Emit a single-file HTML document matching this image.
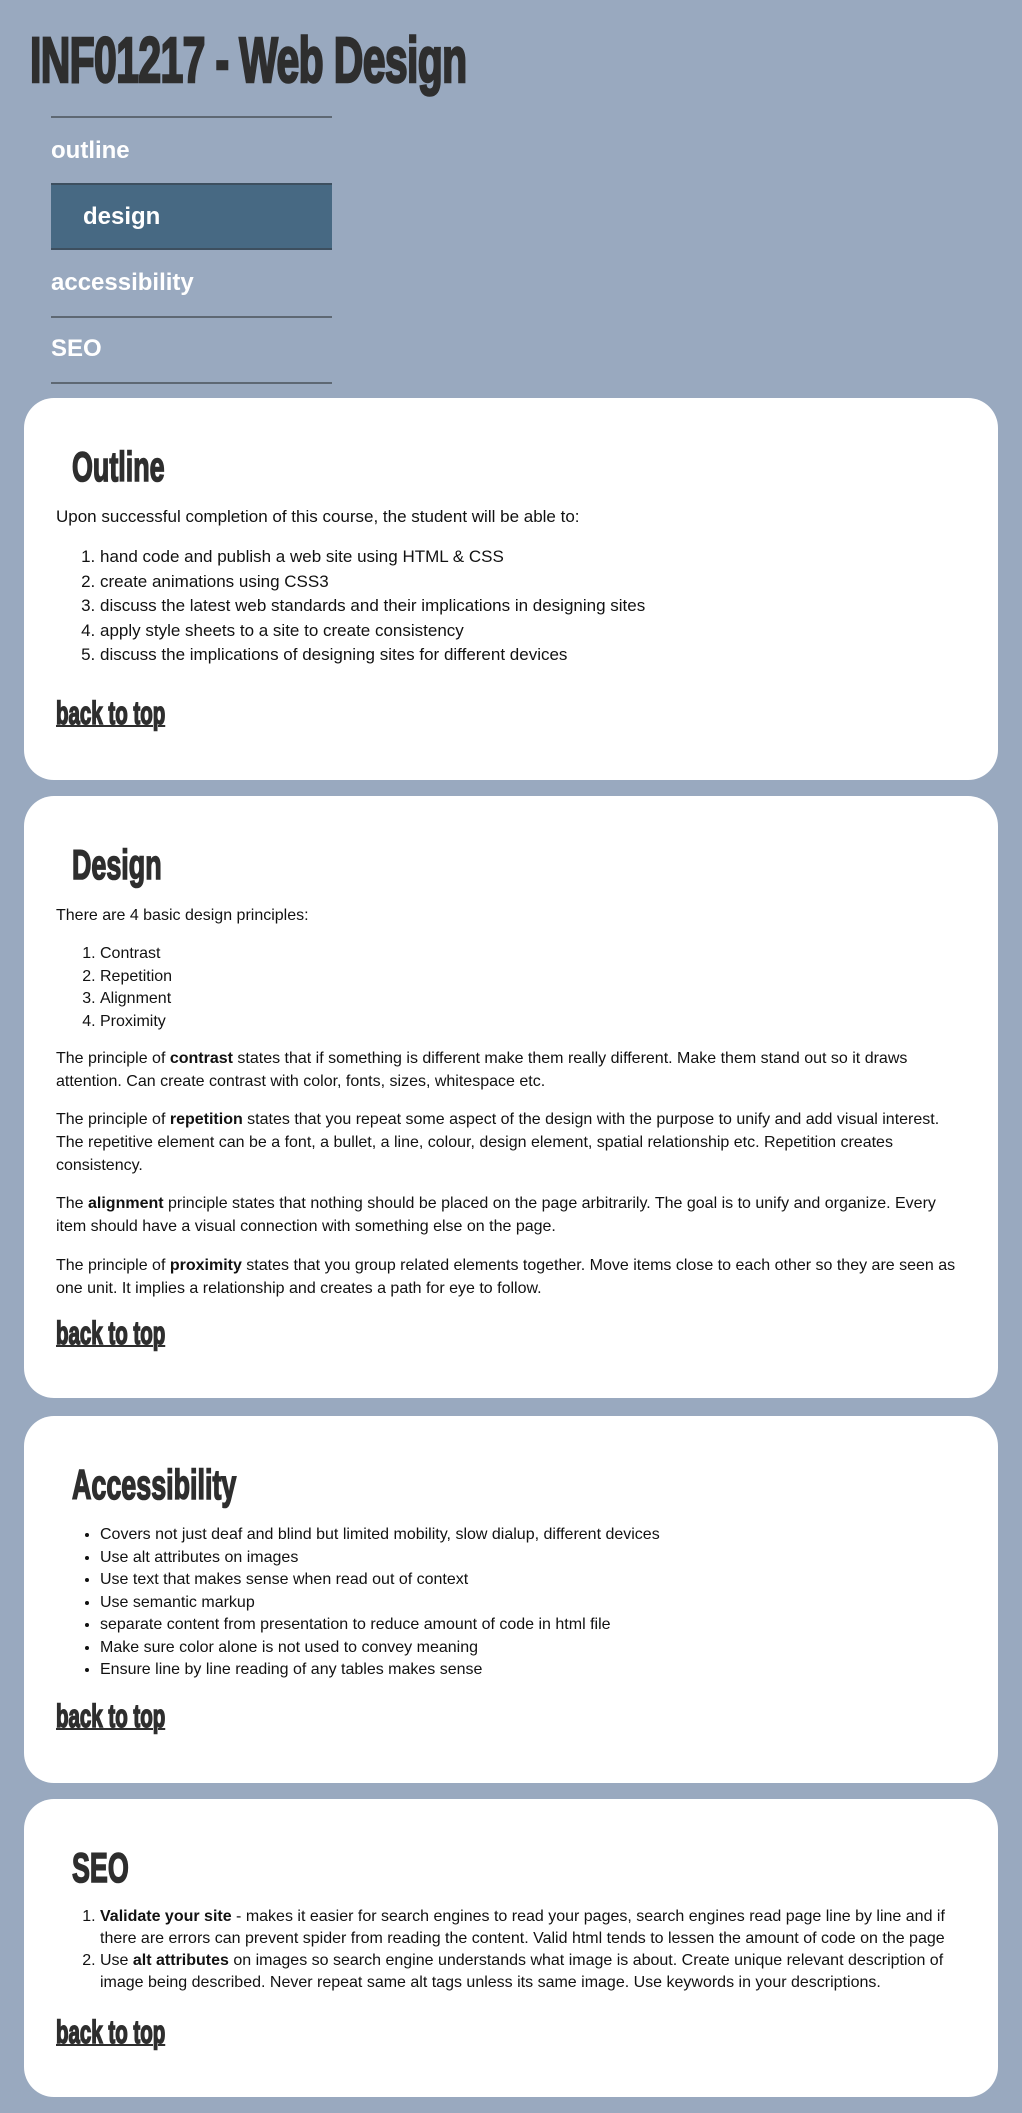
<!DOCTYPE html>
<html><head><meta charset="utf-8"><style>
*{margin:0;padding:0;box-sizing:border-box}
body{width:1022px;height:2113px;background:#99a9bf;font-family:"Liberation Sans",Arial,sans-serif;color:#111;position:relative;overflow:hidden}
.abs{position:absolute}
.cond{font-family:"Liberation Sans Narrow","Liberation Sans",sans-serif;font-weight:bold;color:#2e2e2e;transform-origin:0 0;white-space:nowrap;-webkit-text-stroke:1.6px #2e2e2e}
.title{left:30px;top:28px;font-size:64px;line-height:64px;transform:scaleX(0.64);letter-spacing:-1px;-webkit-text-stroke:2.5px #2e2e2e}
.nav a{position:absolute;left:51px;width:281px;color:#fff;font-weight:bold;font-size:24px;text-decoration:none;line-height:66px}
.line{position:absolute;left:51px;width:281px;height:2px;background:#5e6873}
.card{position:absolute;left:24px;width:974px;background:#fff;border-radius:30px}
.card h2{position:absolute;left:48px;top:48px;font-size:42px;line-height:42px;transform:scaleX(0.64)}
.card .btt{position:absolute;left:32px;font-size:32px;line-height:32px;transform:scaleX(0.64);text-decoration:underline;text-decoration-thickness:2px}
.card p,.card ol,.card ul{position:absolute;left:32px;width:910px;font-size:16px}
.card ol,.card ul{padding-left:44px}
</style></head><body>
<div class="abs cond title">INF01217 - Web Design</div>
<div class="nav">
<div class="line" style="top:116px"></div>
<a style="top:118px">outline</a>
<div class="abs" style="left:51px;top:183px;width:281px;height:67px;background:#476983;border-top:2px solid #3d4f5f;border-bottom:2px solid #3d4f5f"></div>
<a style="top:184px;left:83px">design</a>
<a style="top:250px">accessibility</a>
<div class="line" style="top:316px"></div>
<a style="top:316px">SEO</a>
<div class="line" style="top:382px"></div>
</div>

<div class="card" style="top:398px;height:382px">
<h2 class="cond">Outline</h2>
<p style="top:107px;font-size:17px;line-height:24px">Upon successful completion of this course, the student will be able to:</p>
<ol style="top:147px;font-size:17px;line-height:24.5px">
<li>hand code and publish a web site using HTML &amp; CSS</li>
<li>create animations using CSS3</li>
<li>discuss the latest web standards and their implications in designing sites</li>
<li>apply style sheets to a site to create consistency</li>
<li>discuss the implications of designing sites for different devices</li>
</ol>
<a class="btt cond" style="top:299px">back to top</a>
</div>

<div class="card" style="top:796px;height:602px">
<h2 class="cond">Design</h2>
<p style="top:108px;line-height:24px">There are 4 basic design principles:</p>
<ol style="top:147px;line-height:22.5px"><li>Contrast</li><li>Repetition</li><li>Alignment</li><li>Proximity</li></ol>
<p style="top:251px;line-height:23px">The principle of <b>contrast</b> states that if something is different make them really different. Make them stand out so it draws attention. Can create contrast with color, fonts, sizes, whitespace etc.</p>
<p style="top:312px;line-height:23px">The principle of <b>repetition</b> states that you repeat some aspect of the design with the purpose to unify and add visual interest. The repetitive element can be a font, a bullet, a line, colour, design element, spatial relationship etc. Repetition creates consistency.</p>
<p style="top:396px;line-height:23px">The <b>alignment</b> principle states that nothing should be placed on the page arbitrarily. The goal is to unify and organize. Every item should have a visual connection with something else on the page.</p>
<p style="top:458px;line-height:23px">The principle of <b>proximity</b> states that you group related elements together. Move items close to each other so they are seen as one unit. It implies a relationship and creates a path for eye to follow.</p>
<a class="btt cond" style="top:521px">back to top</a>
</div>

<div class="card" style="top:1416px;height:367px">
<h2 class="cond">Accessibility</h2>
<ul style="top:108px;line-height:22.5px">
<li>Covers not just deaf and blind but limited mobility, slow dialup, different devices</li>
<li>Use alt attributes on images</li>
<li>Use text that makes sense when read out of context</li>
<li>Use semantic markup</li>
<li>separate content from presentation to reduce amount of code in html file</li>
<li>Make sure color alone is not used to convey meaning</li>
<li>Ensure line by line reading of any tables makes sense</li>
</ul>
<a class="btt cond" style="top:284px">back to top</a>
</div>

<div class="card" style="top:1799px;height:298px">
<h2 class="cond">SEO</h2>
<ol style="top:107px;line-height:22px">
<li><b>Validate your site</b> - makes it easier for search engines to read your pages, search engines read page line by line and if there are errors can prevent spider from reading the content. Valid html tends to lessen the amount of code on the page</li>
<li>Use <b>alt attributes</b> on images so search engine understands what image is about. Create unique relevant description of image being described. Never repeat same alt tags unless its same image. Use keywords in your descriptions.</li>
</ol>
<a class="btt cond" style="top:217px">back to top</a>
</div>
</body></html>
